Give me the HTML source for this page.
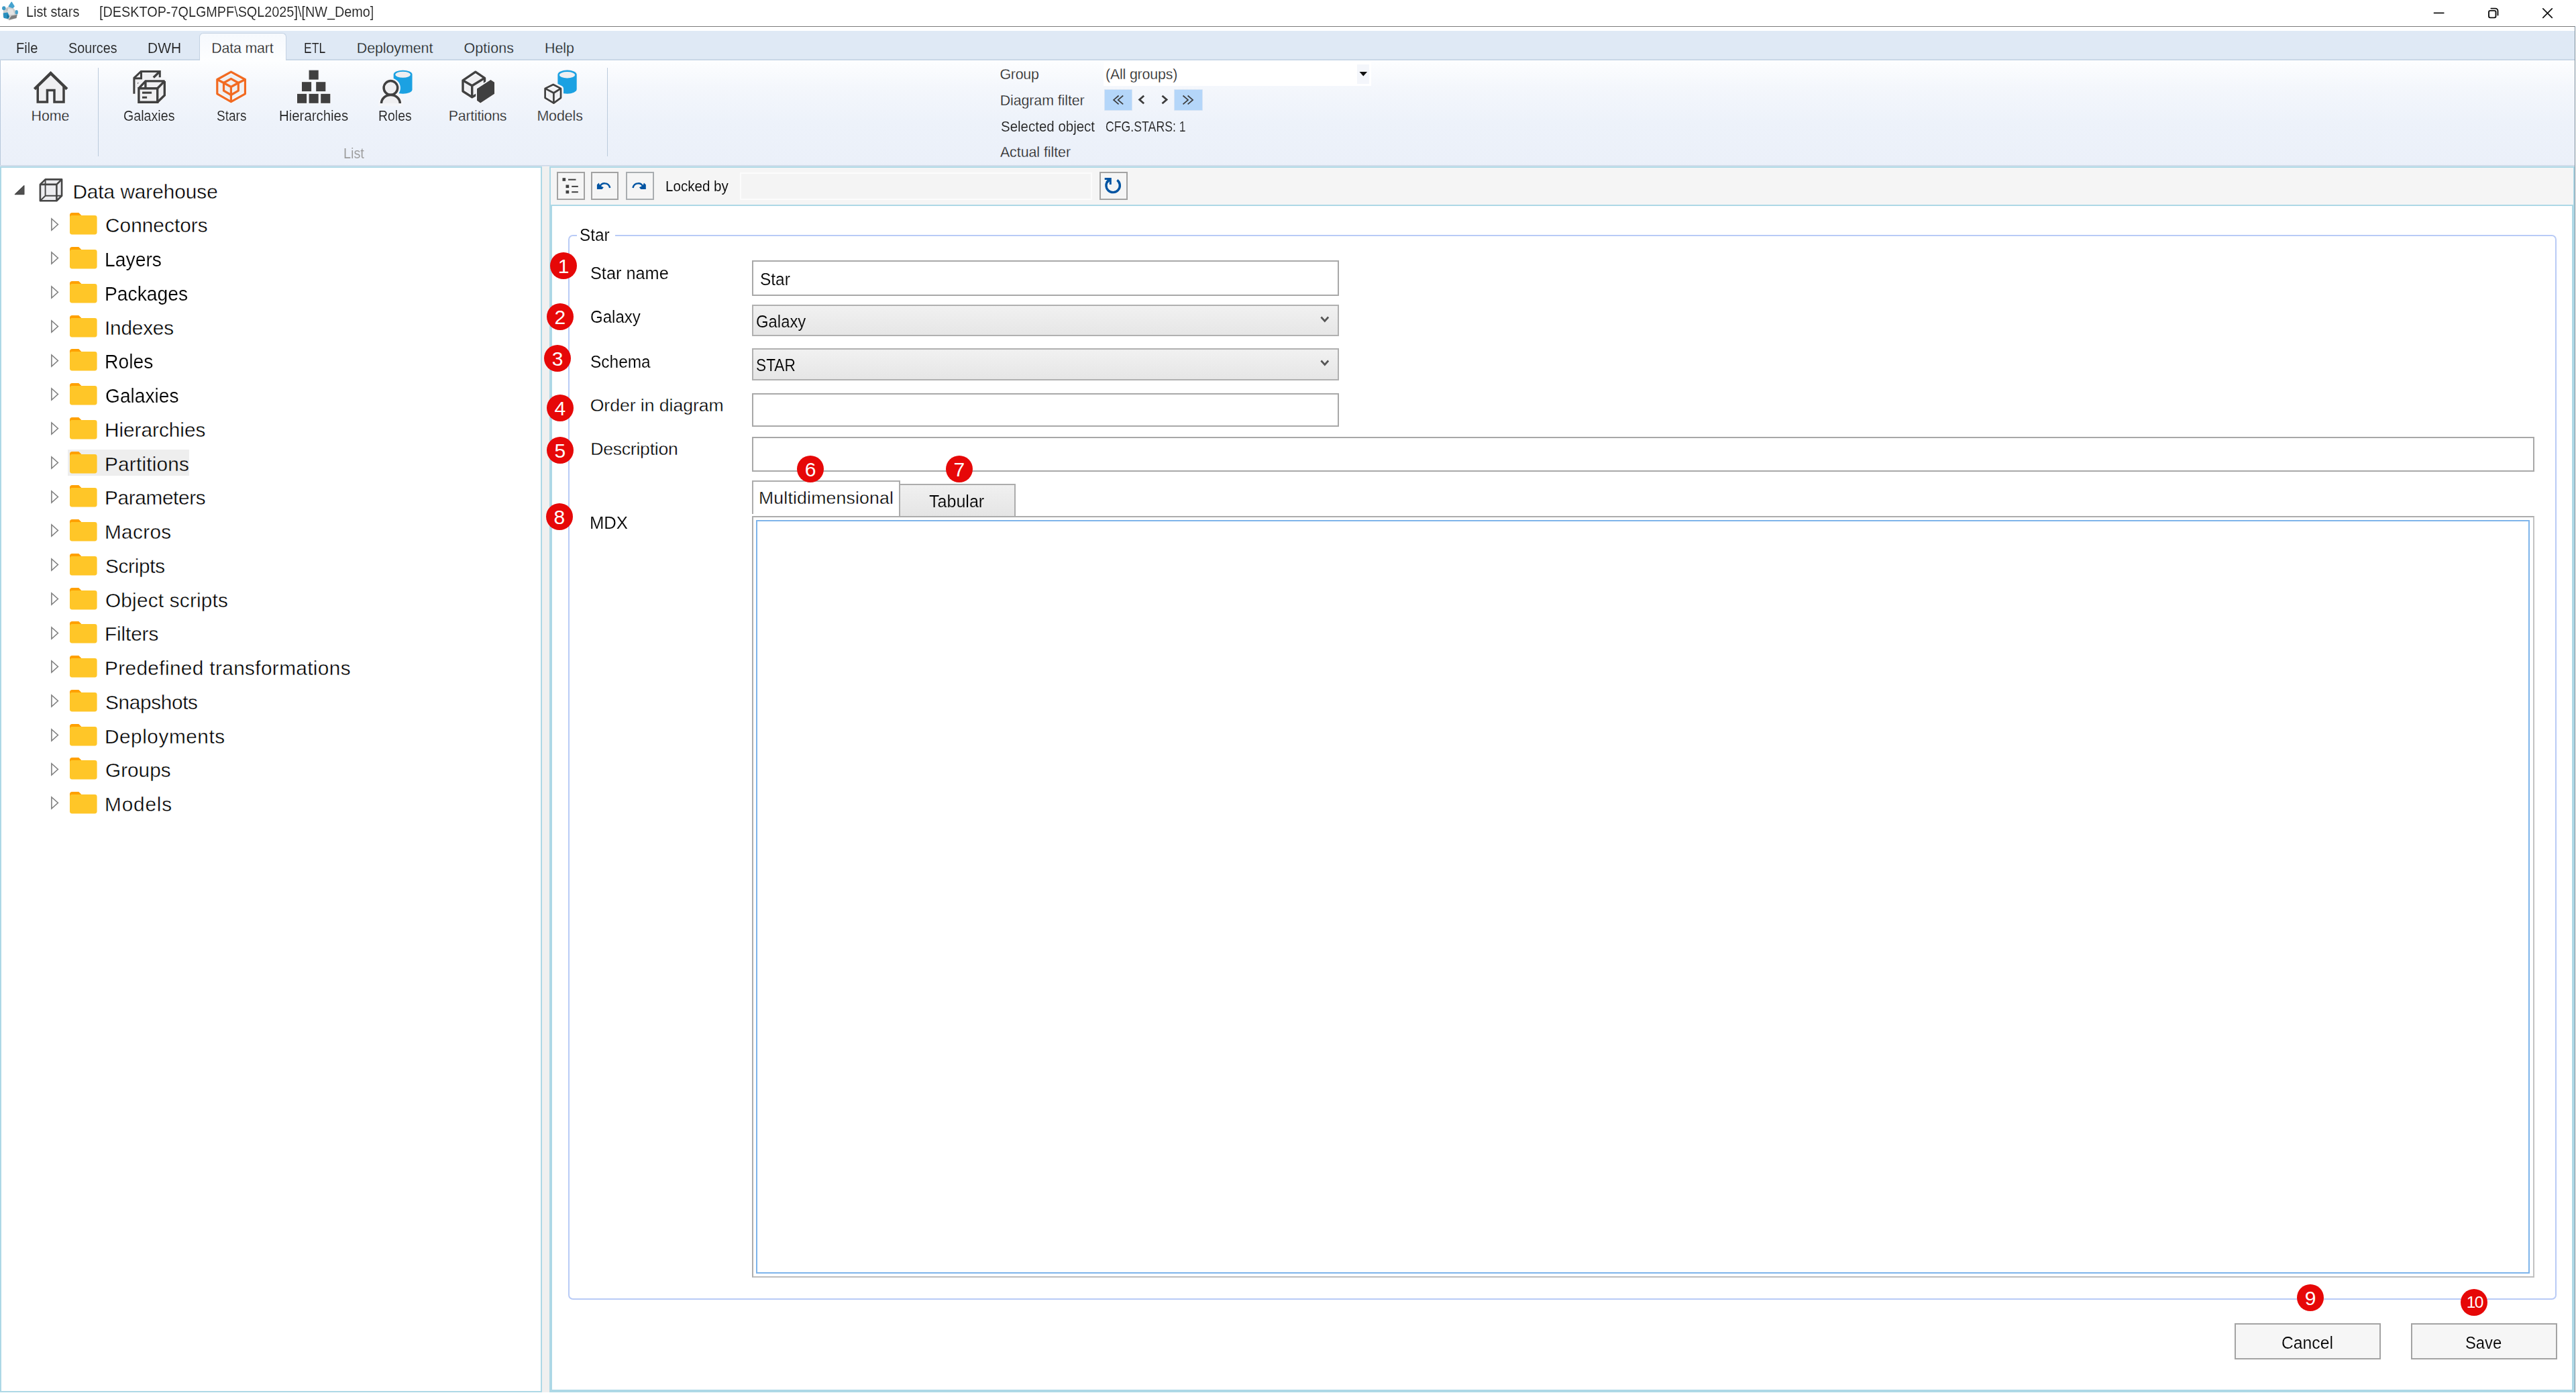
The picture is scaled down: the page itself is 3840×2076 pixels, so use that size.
<!DOCTYPE html>
<html><head><meta charset="utf-8"><title>List stars</title><style>
html,body{margin:0;padding:0}
body{width:3840px;height:2076px;position:relative;overflow:hidden;background:#fff;font-family:"Liberation Sans",sans-serif}
.a{position:absolute;display:block}
.t{position:absolute;white-space:pre;line-height:1;transform-origin:0 0;-webkit-text-stroke:0.0135em #fff;font-family:"Liberation Sans",sans-serif}
.c{width:40.200px;height:40.200px;border-radius:50%;background:#e60808;color:#fff;text-align:center;font-size:30px;line-height:41.700px;font-family:"Liberation Sans",sans-serif}
</style></head>
<body>
<div class="a" style="left:0px;top:39px;width:3839px;height:1px;background:#7a7a7a"></div>
<div class="a" style="left:3838px;top:39px;width:1px;height:2036px;background:#7c8e9b"></div>
<svg class="a" style="left:0px;top:0px;" width="34" height="36" viewBox="0 0 34 36"><defs><filter id="bl" x="-20%" y="-20%" width="140%" height="140%"><feGaussianBlur stdDeviation="0.750"/></filter></defs>
<g filter="url(#bl)">
<path d="M5 14 L14 9 L20 12 L26.500 20 L24.500 27 L14 30.500 L4.500 25.500 Z" fill="#cfcfcf"/>
<path d="M13 29.500 L24.500 27 L25.500 22 L17 23.500 Z" fill="#7e7e7e"/>
<path d="M12 13 L19 14 L21.500 21.500 L14 22 L11 18 Z" fill="#e4e4e4"/>
<path d="M8 14 L12 12 L11 17 Z" fill="#bdbdbd"/>
<path d="M17.200 3.300 L21 9.500 L19 11.500 L13.300 9.500 Z" fill="#45a3cf" stroke="#45a3cf" stroke-width="1.500" stroke-linejoin="round"/>
<ellipse cx="5.800" cy="12.200" rx="2.700" ry="3" fill="#3c99c5"/>
<ellipse cx="24.700" cy="18.300" rx="2.200" ry="3.300" fill="#4aa1c9"/>
<path d="M5.300 20 L11 19 L13.500 24.500 L12 27.500 L6 26.300 Z" fill="#2a90c0" stroke="#2a90c0" stroke-width="1.200" stroke-linejoin="round"/>
<path d="M11 21 L13.500 24.500 L12 27.500 L10.500 26 Z" fill="#1d6f95"/>
</g></svg>
<svg class="a" style="left:3600px;top:0px;" width="240" height="39" viewBox="0 0 240 39"><g fill="none" stroke="#111" stroke-width="1.900" stroke-linecap="round">
<path d="M28.500 19.300 H42.800" stroke-width="1.700"/>
<rect x="110" y="15.900" width="10.500" height="10.500" rx="2.300"/>
<path d="M113.400 12.600 H119.700 a3.800 3.800 0 0 1 3.800 3.800 V22.500"/>
<path d="M190.800 12.800 L204.300 26.300 M204.300 12.800 L190.800 26.300" stroke-width="1.700"/>
</g></svg>
<div class="a" style="left:0px;top:46px;width:3838px;height:44px;background:#dfe9f5"></div>
<div class="a" style="left:0px;top:88px;width:3838px;height:2px;background:linear-gradient(#cfdbe9,#c3d3e4)"></div>
<div class="a" style="left:0px;top:90px;width:3838px;height:156px;background:linear-gradient(#fdfeff 0%,#f4f7fc 25%,#edf2fa 60%,#ebf0f9 100%);border-left:1.5px solid #b7c8db;box-sizing:border-box"></div>
<div class="a" style="left:0px;top:246px;width:3838px;height:1px;background:#cdd9e7"></div>
<div class="a" style="left:0px;top:247px;width:3838px;height:1px;background:#dae1ed"></div>
<div class="a" style="left:297px;top:49px;width:129.5px;height:41px;background:linear-gradient(#f6f9fd,#fdfeff);border:1.5px solid #c3d2e3;border-bottom:none;border-radius:6px 6px 0 0;box-sizing:border-box"></div>
<div class="a" style="left:146px;top:101px;width:1.2px;height:132px;background:#bccbdc"></div>
<div class="a" style="left:905px;top:101px;width:1.2px;height:132px;background:#bccbdc"></div>
<svg class="a" style="left:44px;top:100px;" width="64" height="60" viewBox="44 100 64 60">
<path d="M56.250 128.500 L75.600 110.500 L95 128.500 V152 H81 V134.500 H70.450 V152 H56.250 Z" fill="none" stroke="#f5f6f9" stroke-width="7" stroke-linejoin="round" opacity="0.800"/>
<path d="M56.250 128.500 L75.600 110.500 L95 128.500 V152 H81 V134.500 H70.450 V152 H56.250 Z" fill="#efeff1"/>
<rect x="71.900" y="136" width="7.300" height="18" fill="#f5f6f9"/>
<path d="M56.250 127.500 V152 H70.450 V134.550 H81 V152 H95 V127.500" fill="none" stroke="#404040" stroke-width="3.500"/>
<path d="M51.400 132.800 L75.600 109.100 L99.900 132.800" fill="none" stroke="#404040" stroke-width="4.300"/>
</svg>
<svg class="a" style="left:194px;top:100px;" width="58" height="60" viewBox="194 100 58 60">
<path d="M199.900 139.800 V116 L210 106.500 H238.300 V118 H245.300 V142 L234.700 152.200 H206.900 V139.800 Z" fill="none" stroke="#f5f6f9" stroke-width="6.500" stroke-linejoin="round" opacity="0.800"/>
<path d="M199.900 139.800 V116 L210 106.500 H238.300 V131 H199.900 Z" fill="#efeff1"/>
<g fill="none" stroke="#404040" stroke-width="3">
<path d="M199.900 139.800 V116.200 L210.200 106.500 H238.300 V115.200"/>
<path d="M199.900 116.800 H212"/><path d="M210.500 106.500 V118"/>
<path d="M238 106.800 L228.800 115.600" stroke-width="3.400"/>
</g>
<path d="M206.900 131.700 L217 120.900 H245.300 V142 L234.700 152.200 H206.900 Z" fill="#efeff1" stroke="#f5f6f9" stroke-width="5.500" />
<g fill="none" stroke="#404040" stroke-width="3.400" stroke-linejoin="miter" stroke-miterlimit="1.500">
<path d="M206.900 131.700 H234.700 V152.200 H206.900 Z" stroke-miterlimit="4"/>
<path d="M206.900 131.700 L217 120.900 H245.300 L234.700 131.700"/>
<path d="M245.300 120.900 V142 L234.700 152.200"/>
<path d="M216.900 120.900 V131.700"/>
</g>
<rect x="212" y="136.600" width="14.100" height="3.100" fill="#404040"/><rect x="212" y="143.700" width="7.100" height="3" fill="#404040"/>
<path d="M205 123.300 l1.800 0 l-1.800 2 Z" fill="#404040"/>
</svg>
<svg class="a" style="left:318px;top:100px;" width="54" height="60" viewBox="318 100 54 60">
<path d="M344.400 107.100 L365.400 118.500 V139.800 L344.400 151.700 L323.800 139.800 V118.500 Z" fill="#efeff1" stroke="#f5f6f9" stroke-width="6.500" stroke-linejoin="round"/>
<g fill="none" stroke="#f26a21" stroke-width="3.200" stroke-linejoin="round">
<path d="M344.400 107.100 L365.400 118.500 V139.800 L344.400 151.700 L323.800 139.800 V118.500 Z"/>
<path d="M323.800 118.500 L333.500 123.500 M365.400 118.500 L355.300 123.500"/>
<path d="M344.400 117.400 L355.300 123.500 V135.200 L344.400 141.500 L333.500 135.200 V123.500 Z"/>
<path d="M333.500 123.500 L344.400 129.500 L355.300 123.500 M344.400 129.500 V151.700"/>
</g></svg>
<svg class="a" style="left:438px;top:100px;" width="60" height="60" viewBox="438 100 60 60"><rect x="460.6" y="104.7" width="14.100" height="13.900" fill="#404040" stroke="#f5f6f9" stroke-width="2.500" paint-order="stroke"/><rect x="450" y="122.2" width="14.100" height="13.900" fill="#404040" stroke="#f5f6f9" stroke-width="2.500" paint-order="stroke"/><rect x="471.2" y="122.2" width="14.100" height="13.900" fill="#404040" stroke="#f5f6f9" stroke-width="2.500" paint-order="stroke"/><rect x="443" y="139.9" width="14.100" height="13.900" fill="#404040" stroke="#f5f6f9" stroke-width="2.500" paint-order="stroke"/><rect x="460.6" y="139.9" width="14.100" height="13.900" fill="#404040" stroke="#f5f6f9" stroke-width="2.500" paint-order="stroke"/><rect x="478.2" y="139.9" width="14.100" height="13.900" fill="#404040" stroke="#f5f6f9" stroke-width="2.500" paint-order="stroke"/></svg>
<svg class="a" style="left:560px;top:100px;" width="60" height="60" viewBox="560 100 60 60">
<path d="M586.700 111 a13.900 6.200 0 0 1 27.800 0 V133.600 a13.900 6.200 0 0 1 -27.800 0 Z" fill="#1ba1e2" stroke="#f5f6f9" stroke-width="3" paint-order="stroke"/>
<ellipse cx="600.600" cy="111.300" rx="11.300" ry="4.500" fill="#efeff1"/>
<circle cx="582.400" cy="130.900" r="12" fill="#f5f6f9" stroke="#f5f6f9" stroke-width="5"/>
<path d="M566.700 155.500 V153 a15.700 14 0 0 1 31.400 0 V155.500 Z" fill="#f5f6f9" stroke="#f5f6f9" stroke-width="5"/>
<circle cx="582.400" cy="130.900" r="10.300" fill="#efeff1" stroke="#404040" stroke-width="3.500"/>
<path d="M568.500 154 a13.900 12.500 0 0 1 27.800 0" fill="#efeff1" stroke="#404040" stroke-width="3.500"/>
</svg>
<svg class="a" style="left:682px;top:100px;" width="60" height="60" viewBox="682 100 60 60">
<path d="M708.800 107.200 L722.500 116.300 V134 L703.700 144.700 L690 136 V119.800 Z" fill="#efeff1" stroke="#f5f6f9" stroke-width="7" stroke-linejoin="round"/>
<g stroke="#404040" stroke-width="3.400" stroke-linejoin="round" fill="none">
<path d="M708.800 107.200 L722.500 116.300 V134 L703.700 144.700 L690 136 V119.800 Z"/>
<path d="M690 119.800 L703.700 127.700 L722.500 116.300 M703.700 127.700 V144.700"/>
</g>
<path d="M711 132.200 L731.500 118.900 L737 122.800 V139.800 L716.100 153.500 L711 149.700 Z" fill="#404040" stroke="#f5f6f9" stroke-width="3.600" paint-order="stroke" stroke-linejoin="round"/>
</svg>
<svg class="a" style="left:806px;top:100px;" width="60" height="60" viewBox="806 100 60 60">
<path d="M831.400 111.500 a14.150 7 0 0 1 28.300 0 V132.800 a14.150 7 0 0 1 -28.300 0 Z" fill="#1ba1e2" stroke="#f5f6f9" stroke-width="3" paint-order="stroke"/>
<ellipse cx="845.500" cy="111.800" rx="11.700" ry="4.700" fill="#efeff1"/>
<path d="M824.700 126 L836 131.900 V145.800 L825.400 153.600 L812.600 145.800 V131.900 Z" fill="#efeff1" stroke="#f5f6f9" stroke-width="8" stroke-linejoin="round"/>
<g stroke="#404040" stroke-width="2.700" stroke-linejoin="round" fill="none">
<path d="M824.700 126 L836 131.900 V145.800 L825.400 153.600 L812.600 145.800 V131.900 Z"/>
<path d="M812.600 131.900 L825.400 138.500 L836 131.900 M825.400 138.500 V153.600"/>
</g>
</svg>
<div class="a" style="left:1644.5px;top:91px;width:399.1px;height:37px;background:#fff"></div>
<div class="a" style="left:2022.7px;top:95.7px;width:18.7px;height:29.7px;background:#f4f6fb"></div>
<svg class="a" style="left:2020px;top:100px;" width="25" height="20" viewBox="2020 100 25 20"><path d="M2026.500 107 H2038.100 L2032.300 113.400 Z" fill="#111"/></svg>
<div class="a" style="left:1646.5px;top:133.8px;width:40.7px;height:30.2px;background:#b4d6f9;box-shadow:0 0 0 0.800px #cfe0f3"></div>
<div class="a" style="left:1751.1px;top:133.8px;width:41px;height:30.2px;background:#b4d6f9;box-shadow:0 0 0 0.800px #cfe0f3"></div>
<svg class="a" style="left:1640px;top:130px;" width="160" height="40" viewBox="1640 130 160 40"><g fill="none" stroke="#3c3c3c" stroke-width="1.700">
<path d="M1667.600 142.500 L1660.100 148.900 L1667.600 155.300"/><path d="M1674.200 142.500 L1666.700 148.900 L1674.200 155.300"/>
<path d="M1705.200 142.700 L1698.600 148.500 L1705.200 154.300" stroke-width="2.800"/>
<path d="M1732.500 142.700 L1739.100 148.500 L1732.500 154.300" stroke-width="2.800"/>
<path d="M1763.500 142.500 L1771 148.900 L1763.500 155.300"/><path d="M1770.600 142.500 L1778.100 148.900 L1770.600 155.300"/>
</g></svg>
<div class="a" style="left:0px;top:248px;width:808px;height:1826.6px;background:#fff;border:2px solid #add8e6;border-top-width:2.500px;box-sizing:border-box"></div>
<div class="a" style="left:808px;top:248px;width:11px;height:1826.6px;background:#f0f0f0"></div>
<div class="a" style="left:819px;top:248px;width:3019px;height:1826.6px;background:#f5f5f5;border:2px solid #add8e6;border-top-width:2.500px;box-sizing:border-box"></div>
<div class="a" style="left:819px;top:305px;width:3019px;height:1769.6px;background:#fff;border:4px solid #add8e6;border-top-width:2px;box-sizing:border-box"></div>
<div class="a" style="left:101px;top:669.5px;width:181px;height:39px;background:#eeeeee"></div>
<svg class="a" style="left:16px;top:270px;" width="26" height="26" viewBox="16 270 26 26"><path d="M22.300 289.600 H35.900 V276.600 Z" fill="#505050" stroke="#454545" stroke-width="1.200" stroke-linejoin="round"/></svg>
<svg class="a" style="left:54px;top:262px;" width="44" height="43" viewBox="54 262 44 43"><g fill="#ededf0" stroke="#454545" stroke-width="2.600" stroke-linejoin="round">
<path d="M59.900 274.900 L67.600 267.400 H92.100 V291.700 L84.400 299.300 H59.900 Z"/>
<path d="M59.900 274.900 H84.400 V299.300 M84.400 274.900 L92.100 267.400" fill="none"/>
<path d="M67.600 267.400 V291.700 H92.100 M67.600 291.700 L59.900 299.300" fill="none" stroke-width="1.900"/>
</g></svg>
<svg class="a" style="left:74px;top:322.5px;" width="16" height="23" viewBox="0 0 16 23"><path d="M2.900 3 L12.400 11.500 L2.900 20 Z" fill="#fff" stroke="#7f7f7f" stroke-width="1.600" stroke-linejoin="miter"/></svg>
<svg class="a" style="left:103.9px;top:317.3px;" width="41" height="33" viewBox="0 0 41 33"><path d="M0 3.600 a3.600 3.600 0 0 1 3.600 -3.600 H13.300 L17.600 4.200 H20 V12 H0 Z" fill="#ffa000"/>
<rect x="0" y="4.100" width="40.600" height="28.400" rx="3.400" fill="#ffc628"/></svg>
<svg class="a" style="left:74px;top:373.25px;" width="16" height="23" viewBox="0 0 16 23"><path d="M2.900 3 L12.400 11.500 L2.900 20 Z" fill="#fff" stroke="#7f7f7f" stroke-width="1.600" stroke-linejoin="miter"/></svg>
<svg class="a" style="left:103.9px;top:368.05px;" width="41" height="33" viewBox="0 0 41 33"><path d="M0 3.600 a3.600 3.600 0 0 1 3.600 -3.600 H13.300 L17.600 4.200 H20 V12 H0 Z" fill="#ffa000"/>
<rect x="0" y="4.100" width="40.600" height="28.400" rx="3.400" fill="#ffc628"/></svg>
<svg class="a" style="left:74px;top:424px;" width="16" height="23" viewBox="0 0 16 23"><path d="M2.900 3 L12.400 11.500 L2.900 20 Z" fill="#fff" stroke="#7f7f7f" stroke-width="1.600" stroke-linejoin="miter"/></svg>
<svg class="a" style="left:103.9px;top:418.8px;" width="41" height="33" viewBox="0 0 41 33"><path d="M0 3.600 a3.600 3.600 0 0 1 3.600 -3.600 H13.300 L17.600 4.200 H20 V12 H0 Z" fill="#ffa000"/>
<rect x="0" y="4.100" width="40.600" height="28.400" rx="3.400" fill="#ffc628"/></svg>
<svg class="a" style="left:74px;top:474.75px;" width="16" height="23" viewBox="0 0 16 23"><path d="M2.900 3 L12.400 11.500 L2.900 20 Z" fill="#fff" stroke="#7f7f7f" stroke-width="1.600" stroke-linejoin="miter"/></svg>
<svg class="a" style="left:103.9px;top:469.55px;" width="41" height="33" viewBox="0 0 41 33"><path d="M0 3.600 a3.600 3.600 0 0 1 3.600 -3.600 H13.300 L17.600 4.200 H20 V12 H0 Z" fill="#ffa000"/>
<rect x="0" y="4.100" width="40.600" height="28.400" rx="3.400" fill="#ffc628"/></svg>
<svg class="a" style="left:74px;top:525.5px;" width="16" height="23" viewBox="0 0 16 23"><path d="M2.900 3 L12.400 11.500 L2.900 20 Z" fill="#fff" stroke="#7f7f7f" stroke-width="1.600" stroke-linejoin="miter"/></svg>
<svg class="a" style="left:103.9px;top:520.3px;" width="41" height="33" viewBox="0 0 41 33"><path d="M0 3.600 a3.600 3.600 0 0 1 3.600 -3.600 H13.300 L17.600 4.200 H20 V12 H0 Z" fill="#ffa000"/>
<rect x="0" y="4.100" width="40.600" height="28.400" rx="3.400" fill="#ffc628"/></svg>
<svg class="a" style="left:74px;top:576.25px;" width="16" height="23" viewBox="0 0 16 23"><path d="M2.900 3 L12.400 11.500 L2.900 20 Z" fill="#fff" stroke="#7f7f7f" stroke-width="1.600" stroke-linejoin="miter"/></svg>
<svg class="a" style="left:103.9px;top:571.05px;" width="41" height="33" viewBox="0 0 41 33"><path d="M0 3.600 a3.600 3.600 0 0 1 3.600 -3.600 H13.300 L17.600 4.200 H20 V12 H0 Z" fill="#ffa000"/>
<rect x="0" y="4.100" width="40.600" height="28.400" rx="3.400" fill="#ffc628"/></svg>
<svg class="a" style="left:74px;top:627px;" width="16" height="23" viewBox="0 0 16 23"><path d="M2.900 3 L12.400 11.500 L2.900 20 Z" fill="#fff" stroke="#7f7f7f" stroke-width="1.600" stroke-linejoin="miter"/></svg>
<svg class="a" style="left:103.9px;top:621.8px;" width="41" height="33" viewBox="0 0 41 33"><path d="M0 3.600 a3.600 3.600 0 0 1 3.600 -3.600 H13.300 L17.600 4.200 H20 V12 H0 Z" fill="#ffa000"/>
<rect x="0" y="4.100" width="40.600" height="28.400" rx="3.400" fill="#ffc628"/></svg>
<svg class="a" style="left:74px;top:677.75px;" width="16" height="23" viewBox="0 0 16 23"><path d="M2.900 3 L12.400 11.500 L2.900 20 Z" fill="#fff" stroke="#7f7f7f" stroke-width="1.600" stroke-linejoin="miter"/></svg>
<svg class="a" style="left:103.9px;top:672.55px;" width="41" height="33" viewBox="0 0 41 33"><path d="M0 3.600 a3.600 3.600 0 0 1 3.600 -3.600 H13.300 L17.600 4.200 H20 V12 H0 Z" fill="#ffa000"/>
<rect x="0" y="4.100" width="40.600" height="28.400" rx="3.400" fill="#ffc628"/></svg>
<svg class="a" style="left:74px;top:728.5px;" width="16" height="23" viewBox="0 0 16 23"><path d="M2.900 3 L12.400 11.500 L2.900 20 Z" fill="#fff" stroke="#7f7f7f" stroke-width="1.600" stroke-linejoin="miter"/></svg>
<svg class="a" style="left:103.9px;top:723.3px;" width="41" height="33" viewBox="0 0 41 33"><path d="M0 3.600 a3.600 3.600 0 0 1 3.600 -3.600 H13.300 L17.600 4.200 H20 V12 H0 Z" fill="#ffa000"/>
<rect x="0" y="4.100" width="40.600" height="28.400" rx="3.400" fill="#ffc628"/></svg>
<svg class="a" style="left:74px;top:779.25px;" width="16" height="23" viewBox="0 0 16 23"><path d="M2.900 3 L12.400 11.500 L2.900 20 Z" fill="#fff" stroke="#7f7f7f" stroke-width="1.600" stroke-linejoin="miter"/></svg>
<svg class="a" style="left:103.9px;top:774.05px;" width="41" height="33" viewBox="0 0 41 33"><path d="M0 3.600 a3.600 3.600 0 0 1 3.600 -3.600 H13.300 L17.600 4.200 H20 V12 H0 Z" fill="#ffa000"/>
<rect x="0" y="4.100" width="40.600" height="28.400" rx="3.400" fill="#ffc628"/></svg>
<svg class="a" style="left:74px;top:830px;" width="16" height="23" viewBox="0 0 16 23"><path d="M2.900 3 L12.400 11.500 L2.900 20 Z" fill="#fff" stroke="#7f7f7f" stroke-width="1.600" stroke-linejoin="miter"/></svg>
<svg class="a" style="left:103.9px;top:824.8px;" width="41" height="33" viewBox="0 0 41 33"><path d="M0 3.600 a3.600 3.600 0 0 1 3.600 -3.600 H13.300 L17.600 4.200 H20 V12 H0 Z" fill="#ffa000"/>
<rect x="0" y="4.100" width="40.600" height="28.400" rx="3.400" fill="#ffc628"/></svg>
<svg class="a" style="left:74px;top:880.75px;" width="16" height="23" viewBox="0 0 16 23"><path d="M2.900 3 L12.400 11.500 L2.900 20 Z" fill="#fff" stroke="#7f7f7f" stroke-width="1.600" stroke-linejoin="miter"/></svg>
<svg class="a" style="left:103.9px;top:875.55px;" width="41" height="33" viewBox="0 0 41 33"><path d="M0 3.600 a3.600 3.600 0 0 1 3.600 -3.600 H13.300 L17.600 4.200 H20 V12 H0 Z" fill="#ffa000"/>
<rect x="0" y="4.100" width="40.600" height="28.400" rx="3.400" fill="#ffc628"/></svg>
<svg class="a" style="left:74px;top:931.5px;" width="16" height="23" viewBox="0 0 16 23"><path d="M2.900 3 L12.400 11.500 L2.900 20 Z" fill="#fff" stroke="#7f7f7f" stroke-width="1.600" stroke-linejoin="miter"/></svg>
<svg class="a" style="left:103.9px;top:926.3px;" width="41" height="33" viewBox="0 0 41 33"><path d="M0 3.600 a3.600 3.600 0 0 1 3.600 -3.600 H13.300 L17.600 4.200 H20 V12 H0 Z" fill="#ffa000"/>
<rect x="0" y="4.100" width="40.600" height="28.400" rx="3.400" fill="#ffc628"/></svg>
<svg class="a" style="left:74px;top:982.25px;" width="16" height="23" viewBox="0 0 16 23"><path d="M2.900 3 L12.400 11.500 L2.900 20 Z" fill="#fff" stroke="#7f7f7f" stroke-width="1.600" stroke-linejoin="miter"/></svg>
<svg class="a" style="left:103.9px;top:977.05px;" width="41" height="33" viewBox="0 0 41 33"><path d="M0 3.600 a3.600 3.600 0 0 1 3.600 -3.600 H13.300 L17.600 4.200 H20 V12 H0 Z" fill="#ffa000"/>
<rect x="0" y="4.100" width="40.600" height="28.400" rx="3.400" fill="#ffc628"/></svg>
<svg class="a" style="left:74px;top:1033px;" width="16" height="23" viewBox="0 0 16 23"><path d="M2.900 3 L12.400 11.500 L2.900 20 Z" fill="#fff" stroke="#7f7f7f" stroke-width="1.600" stroke-linejoin="miter"/></svg>
<svg class="a" style="left:103.9px;top:1027.8px;" width="41" height="33" viewBox="0 0 41 33"><path d="M0 3.600 a3.600 3.600 0 0 1 3.600 -3.600 H13.300 L17.600 4.200 H20 V12 H0 Z" fill="#ffa000"/>
<rect x="0" y="4.100" width="40.600" height="28.400" rx="3.400" fill="#ffc628"/></svg>
<svg class="a" style="left:74px;top:1083.75px;" width="16" height="23" viewBox="0 0 16 23"><path d="M2.900 3 L12.400 11.500 L2.900 20 Z" fill="#fff" stroke="#7f7f7f" stroke-width="1.600" stroke-linejoin="miter"/></svg>
<svg class="a" style="left:103.9px;top:1078.55px;" width="41" height="33" viewBox="0 0 41 33"><path d="M0 3.600 a3.600 3.600 0 0 1 3.600 -3.600 H13.300 L17.600 4.200 H20 V12 H0 Z" fill="#ffa000"/>
<rect x="0" y="4.100" width="40.600" height="28.400" rx="3.400" fill="#ffc628"/></svg>
<svg class="a" style="left:74px;top:1134.5px;" width="16" height="23" viewBox="0 0 16 23"><path d="M2.900 3 L12.400 11.500 L2.900 20 Z" fill="#fff" stroke="#7f7f7f" stroke-width="1.600" stroke-linejoin="miter"/></svg>
<svg class="a" style="left:103.9px;top:1129.3px;" width="41" height="33" viewBox="0 0 41 33"><path d="M0 3.600 a3.600 3.600 0 0 1 3.600 -3.600 H13.300 L17.600 4.200 H20 V12 H0 Z" fill="#ffa000"/>
<rect x="0" y="4.100" width="40.600" height="28.400" rx="3.400" fill="#ffc628"/></svg>
<svg class="a" style="left:74px;top:1185.25px;" width="16" height="23" viewBox="0 0 16 23"><path d="M2.900 3 L12.400 11.500 L2.900 20 Z" fill="#fff" stroke="#7f7f7f" stroke-width="1.600" stroke-linejoin="miter"/></svg>
<svg class="a" style="left:103.9px;top:1180.05px;" width="41" height="33" viewBox="0 0 41 33"><path d="M0 3.600 a3.600 3.600 0 0 1 3.600 -3.600 H13.300 L17.600 4.200 H20 V12 H0 Z" fill="#ffa000"/>
<rect x="0" y="4.100" width="40.600" height="28.400" rx="3.400" fill="#ffc628"/></svg>
<div class="a" style="left:830.3px;top:256.3px;width:41.8px;height:41.8px;background:#f5f5f5;border:2.300px solid #a2a2a2;box-sizing:border-box"></div>
<div class="a" style="left:880.6px;top:256.3px;width:41.8px;height:41.8px;background:#f5f5f5;border:2.300px solid #a2a2a2;box-sizing:border-box"></div>
<div class="a" style="left:933.1px;top:256.3px;width:41.8px;height:41.8px;background:#f5f5f5;border:2.300px solid #a9adb0;box-sizing:border-box"></div>
<div class="a" style="left:1638.9px;top:256.3px;width:41.8px;height:41.8px;background:#f5f5f5;border:2.300px solid #a2a2a2;box-sizing:border-box"></div>
<div class="a" style="left:1103px;top:256.5px;width:525px;height:41.5px;background:#f4f4f4;border:2px solid #fcfcfc;box-sizing:border-box"></div>
<svg class="a" style="left:830px;top:256px;" width="42" height="42" viewBox="0 0 42 42"><g fill="#404040">
<rect x="8.500" y="9.200" width="4.600" height="4.600"/><rect x="17" y="10.700" width="11.500" height="2"/>
<rect x="13.500" y="19.500" width="4.700" height="4.600"/><rect x="22.200" y="20.900" width="9.600" height="2"/>
<rect x="13.500" y="27.800" width="4.700" height="4.600"/><rect x="22.200" y="29.200" width="9.600" height="2"/>
</g></svg>
<svg class="a" style="left:880px;top:256px;" width="43" height="43" viewBox="880 256 43 43"><path d="M894.300 278.300 C896.500 271.700 907.300 271.200 909.200 280" fill="none" stroke="#0054a2" stroke-width="2.500"/>
<path d="M889.900 275.300 L892.800 272.400 L894.200 276.500 L899.800 279.300 L897.400 281.900 H889.900 Z" fill="#0054a2"/></svg>
<svg class="a" style="left:933px;top:256px;" width="43" height="43" viewBox="933 256 43 43"><path d="M958.400 278.300 C956.200 271.700 945.400 271.200 943.500 280" fill="none" stroke="#0054a2" stroke-width="2.500"/>
<path d="M962.800 275.300 L959.900 272.400 L958.500 276.500 L952.900 279.300 L955.300 281.900 H962.800 Z" fill="#0054a2"/></svg>
<svg class="a" style="left:1639px;top:256px;" width="42" height="42" viewBox="0 0 42 42"><path d="M26.300 12.300 A10.200 10.200 0 1 1 13.400 12.800" fill="none" stroke="#0054a2" stroke-width="3.400"/>
<path d="M7.700 10.500 H16.300 V18.900" fill="none" stroke="#0054a2" stroke-width="3"/>
<path d="M15.800 11 L10.800 16" fill="none" stroke="#0054a2" stroke-width="3.400"/></svg>
<div class="a" style="left:847px;top:349.7px;width:2964px;height:1587.2px;border:2px solid #b9cbf6;border-radius:7px;box-sizing:border-box"></div>
<div class="a" style="left:860px;top:340px;width:57px;height:25px;background:#fff"></div>
<div class="a" style="left:1121px;top:388.4px;width:875px;height:52.4px;background:#fff;border:2px solid #a8a8a8;box-sizing:border-box"></div>
<div class="a" style="left:1121px;top:454px;width:875px;height:47px;background:linear-gradient(#f1f1f1,#e6e6e6);border:2px solid #b0b0b0;box-sizing:border-box"></div>
<div class="a" style="left:1121px;top:519.3px;width:875px;height:47.4px;background:linear-gradient(#f1f1f1,#e6e6e6);border:2px solid #b0b0b0;box-sizing:border-box"></div>
<div class="a" style="left:1121px;top:585.5px;width:875px;height:50.2px;background:#fff;border:2px solid #a8a8a8;box-sizing:border-box"></div>
<div class="a" style="left:1121px;top:651px;width:2657px;height:52px;background:#fff;border:2px solid #a8a8a8;box-sizing:border-box"></div>
<svg class="a" style="left:1967.5px;top:470.5px;" width="15" height="11" viewBox="0 0 15 11"><path d="M1.400 1.500 L6.800 7.500 L12.200 1.500" fill="none" stroke="#555" stroke-width="2.700"/></svg>
<svg class="a" style="left:1967.5px;top:536px;" width="15" height="11" viewBox="0 0 15 11"><path d="M1.400 1.500 L6.800 7.500 L12.200 1.500" fill="none" stroke="#555" stroke-width="2.700"/></svg>
<div class="a" style="left:1121px;top:768.9px;width:2657px;height:1135.6px;background:#fff;border:2px solid #acacac;border-right-color:#c2c2c2;border-bottom-color:#bdbdbd;box-sizing:border-box"></div>
<div class="a" style="left:1340px;top:720.9px;width:173.9px;height:48.1px;background:linear-gradient(#f0f0f0,#e5e5e5);border:2px solid #acacac;border-bottom:none;box-sizing:border-box"></div>
<div class="a" style="left:1121px;top:716.4px;width:220.9px;height:49.6px;background:#fff;border:2px solid #acacac;border-bottom:none;box-sizing:border-box"></div>
<div class="a" style="left:1126.8px;top:775.4px;width:2644.4px;height:1122.2px;background:#fff;border:2px solid #7eb4ea;box-sizing:border-box"></div>
<div class="a" style="left:3331.2px;top:1972.2px;width:218px;height:53.7px;background:#f6f6f6;border:2.500px solid #a3a3a3;box-sizing:border-box"></div>
<div class="a" style="left:3593.8px;top:1972.2px;width:218.1px;height:53.7px;background:#f6f6f6;border:2.500px solid #a3a3a3;box-sizing:border-box"></div>
<div class="a c" style="left:819.9px;top:375.75px">1</div>
<div class="a c" style="left:814.75px;top:451.9px">2</div>
<div class="a c" style="left:810.9px;top:513.9px">3</div>
<div class="a c" style="left:814.7px;top:588.1px">4</div>
<div class="a c" style="left:814.7px;top:650.8px">5</div>
<div class="a c" style="left:1187.9px;top:678.8px">6</div>
<div class="a c" style="left:1409.7px;top:678.8px">7</div>
<div class="a c" style="left:813.8px;top:749.6px">8</div>
<div class="a c" style="left:3424.05px;top:1913.6px">9</div>
<div class="a c" style="left:3668px;top:1920.75px;font-size:24.500px;letter-spacing:-1.500px;line-height:39.400px;text-indent:1.400px">10</div>
<span class="t" style="left:38.87px;top:8.00px;font-size:21.4px;color:#1c1c1c;-webkit-text-stroke-width:0.006em;transform:scaleX(0.9274)">List stars</span>
<span class="t" style="left:147.57px;top:8.00px;font-size:21.4px;color:#1c1c1c;-webkit-text-stroke-width:0.006em;transform:scaleX(0.9264)">[DESKTOP-7QLGMPF\SQL2025]\[NW_Demo]</span>
<span class="t" style="left:23.56px;top:62.00px;font-size:21.4px;color:#1e1e1e;-webkit-text-stroke-color:#dfe9f5;-webkit-text-stroke-width:0.006em;transform:scaleX(0.9426)">File</span>
<span class="t" style="left:102.00px;top:62.00px;font-size:21.4px;color:#1e1e1e;-webkit-text-stroke-color:#dfe9f5;-webkit-text-stroke-width:0.006em;transform:scaleX(0.9257)">Sources</span>
<span class="t" style="left:220.22px;top:62.00px;font-size:21.4px;color:#1e1e1e;-webkit-text-stroke-color:#dfe9f5;-webkit-text-stroke-width:0.006em;transform:scaleX(0.9828)">DWH</span>
<span class="t" style="left:315.20px;top:62.00px;font-size:21.4px;letter-spacing:-0.171px;color:#1e1e1e;-webkit-text-stroke-color:#fafcfe">Data mart</span>
<span class="t" style="left:453.38px;top:62.00px;font-size:21.4px;color:#1e1e1e;-webkit-text-stroke-color:#dfe9f5;-webkit-text-stroke-width:0.006em;transform:scaleX(0.8217)">ETL</span>
<span class="t" style="left:531.80px;top:62.00px;font-size:21.4px;letter-spacing:-0.066px;color:#1e1e1e;-webkit-text-stroke-color:#dfe9f5">Deployment</span>
<span class="t" style="left:691.50px;top:62.00px;font-size:21.4px;letter-spacing:0.113px;color:#1e1e1e;-webkit-text-stroke-color:#dfe9f5">Options</span>
<span class="t" style="left:812.00px;top:62.00px;font-size:21.4px;letter-spacing:-0.032px;color:#1e1e1e;-webkit-text-stroke-color:#dfe9f5">Help</span>
<span class="t" style="left:46.50px;top:163.00px;font-size:21.4px;letter-spacing:-0.054px;color:#1e1e1e;-webkit-text-stroke-color:#eff3fb">Home</span>
<span class="t" style="left:183.58px;top:163.00px;font-size:21.4px;color:#1e1e1e;-webkit-text-stroke-color:#eff3fb;-webkit-text-stroke-width:0.006em;transform:scaleX(0.9187)">Galaxies</span>
<span class="t" style="left:322.70px;top:163.00px;font-size:21.4px;color:#1e1e1e;-webkit-text-stroke-color:#eff3fb;-webkit-text-stroke-width:0.006em;transform:scaleX(0.8897)">Stars</span>
<span class="t" style="left:415.55px;top:163.00px;font-size:21.4px;color:#1e1e1e;-webkit-text-stroke-color:#eff3fb;-webkit-text-stroke-width:0.006em;transform:scaleX(0.9532)">Hierarchies</span>
<span class="t" style="left:564.49px;top:163.00px;font-size:21.4px;color:#1e1e1e;-webkit-text-stroke-color:#eff3fb;-webkit-text-stroke-width:0.006em;transform:scaleX(0.9077)">Roles</span>
<span class="t" style="left:668.80px;top:163.00px;font-size:21.4px;letter-spacing:-0.275px;color:#1e1e1e;-webkit-text-stroke-color:#eff3fb">Partitions</span>
<span class="t" style="left:800.40px;top:163.00px;font-size:21.4px;letter-spacing:-0.092px;color:#1e1e1e;-webkit-text-stroke-color:#eff3fb">Models</span>
<span class="t" style="left:512.47px;top:219.00px;font-size:21.4px;color:#9a9a9a;-webkit-text-stroke-color:#ebf0f9;-webkit-text-stroke-width:0.006em;transform:scaleX(0.9275)">List</span>
<span class="t" style="left:1490.50px;top:101.00px;font-size:21.4px;letter-spacing:-0.264px;color:#1e1e1e;-webkit-text-stroke-color:#f8fafd">Group</span>
<span class="t" style="left:1648.00px;top:101.00px;font-size:21.4px;letter-spacing:-0.186px;color:#1e1e1e">(All groups)</span>
<span class="t" style="left:1490.70px;top:140.00px;font-size:21.4px;letter-spacing:-0.089px;color:#1e1e1e;-webkit-text-stroke-color:#f2f5fc">Diagram filter</span>
<span class="t" style="left:1491.50px;top:179.00px;font-size:21.4px;color:#1e1e1e;-webkit-text-stroke-color:#eef2fa;-webkit-text-stroke-width:0.006em;transform:scaleX(0.9575)">Selected object</span>
<span class="t" style="left:1647.77px;top:179.00px;font-size:21.4px;color:#1e1e1e;-webkit-text-stroke-color:#eef2fa;-webkit-text-stroke-width:0.006em;transform:scaleX(0.8276)">CFG.STARS: 1</span>
<span class="t" style="left:1490.90px;top:217.00px;font-size:21.4px;letter-spacing:-0.057px;color:#1e1e1e;-webkit-text-stroke-color:#ebf0f9">Actual filter</span>
<span class="t" style="left:108.40px;top:271.00px;font-size:29.75px;letter-spacing:-0.023px;color:#000">Data warehouse</span>
<span class="t" style="left:157.00px;top:321.00px;font-size:29.75px;letter-spacing:0.060px;color:#000">Connectors</span>
<span class="t" style="left:156.10px;top:372.00px;font-size:29.75px;color:#000;-webkit-text-stroke-width:0.006em;transform:scaleX(0.9523)">Layers</span>
<span class="t" style="left:156.10px;top:423.00px;font-size:29.75px;color:#000;-webkit-text-stroke-width:0.006em;transform:scaleX(0.9501)">Packages</span>
<span class="t" style="left:156.00px;top:474.00px;font-size:29.75px;letter-spacing:-0.187px;color:#000">Indexes</span>
<span class="t" style="left:156.10px;top:524.00px;font-size:29.75px;color:#000;-webkit-text-stroke-width:0.006em;transform:scaleX(0.951)">Roles</span>
<span class="t" style="left:157.05px;top:575.00px;font-size:29.75px;color:#000;-webkit-text-stroke-width:0.006em;transform:scaleX(0.9458)">Galaxies</span>
<span class="t" style="left:156.00px;top:626.00px;font-size:29.75px;letter-spacing:-0.007px;color:#000">Hierarchies</span>
<span class="t" style="left:156.00px;top:677.00px;font-size:29.75px;letter-spacing:0.207px;color:#000;-webkit-text-stroke-color:#eeeeee">Partitions</span>
<span class="t" style="left:156.00px;top:727.00px;font-size:29.75px;letter-spacing:-0.343px;color:#000">Parameters</span>
<span class="t" style="left:156.00px;top:778.00px;font-size:29.75px;letter-spacing:0.329px;color:#000">Macros</span>
<span class="t" style="left:157.00px;top:829.00px;font-size:29.75px;letter-spacing:-0.308px;color:#000">Scripts</span>
<span class="t" style="left:157.00px;top:880.00px;font-size:29.75px;letter-spacing:0.213px;color:#000">Object scripts</span>
<span class="t" style="left:156.00px;top:930.00px;font-size:29.75px;letter-spacing:-0.118px;color:#000">Filters</span>
<span class="t" style="left:156.00px;top:981.00px;font-size:29.75px;letter-spacing:0.375px;color:#000">Predefined transformations</span>
<span class="t" style="left:157.00px;top:1032.00px;font-size:29.75px;letter-spacing:-0.326px;color:#000">Snapshots</span>
<span class="t" style="left:156.00px;top:1083.00px;font-size:29.75px;letter-spacing:0.546px;color:#000">Deployments</span>
<span class="t" style="left:157.00px;top:1133.00px;font-size:29.75px;letter-spacing:0.003px;color:#000">Groups</span>
<span class="t" style="left:156.00px;top:1184.00px;font-size:29.75px;letter-spacing:0.854px;color:#000">Models</span>
<span class="t" style="left:991.54px;top:268.00px;font-size:21.4px;color:#000;-webkit-text-stroke-color:#f5f5f5;-webkit-text-stroke-width:0.006em;transform:scaleX(0.9627)">Locked by</span>
<span class="t" style="left:864.29px;top:337.00px;font-size:26.6px;color:#000;-webkit-text-stroke-width:0.006em;transform:scaleX(0.9141)">Star</span>
<span class="t" style="left:879.75px;top:394.00px;font-size:26.6px;color:#000;-webkit-text-stroke-width:0.006em;transform:scaleX(0.9512)">Star name</span>
<span class="t" style="left:879.80px;top:459.00px;font-size:26.6px;color:#000;-webkit-text-stroke-width:0.006em;transform:scaleX(0.9046)">Galaxy</span>
<span class="t" style="left:879.78px;top:526.00px;font-size:26.6px;color:#000;-webkit-text-stroke-width:0.006em;transform:scaleX(0.9197)">Schema</span>
<span class="t" style="left:879.70px;top:591.00px;font-size:26.6px;letter-spacing:-0.032px;color:#000">Order in diagram</span>
<span class="t" style="left:880.20px;top:656.00px;font-size:26.6px;letter-spacing:-0.243px;color:#000">Description</span>
<span class="t" style="left:879.07px;top:766.00px;font-size:26.6px;color:#000;-webkit-text-stroke-width:0.006em;transform:scaleX(0.9641)">MDX</span>
<span class="t" style="left:1133.08px;top:403.00px;font-size:26.6px;color:#000;-webkit-text-stroke-width:0.006em;transform:scaleX(0.9183)">Star</span>
<span class="t" style="left:1127.10px;top:466.00px;font-size:26.6px;color:#000;-webkit-text-stroke-color:#ebebeb;-webkit-text-stroke-width:0.006em;transform:scaleX(0.8973)">Galaxy</span>
<span class="t" style="left:1127.15px;top:531.00px;font-size:26.6px;color:#000;-webkit-text-stroke-color:#ebebeb;-webkit-text-stroke-width:0.006em;transform:scaleX(0.854)">STAR</span>
<span class="t" style="left:1131.00px;top:729.00px;font-size:26.6px;letter-spacing:0.190px;color:#000">Multidimensional</span>
<span class="t" style="left:1384.80px;top:734.00px;font-size:26.6px;color:#000;-webkit-text-stroke-color:#ebebeb;-webkit-text-stroke-width:0.006em;transform:scaleX(0.942)">Tabular</span>
<span class="t" style="left:3400.87px;top:1988.00px;font-size:26.6px;color:#000;-webkit-text-stroke-color:#f6f6f6;-webkit-text-stroke-width:0.006em;transform:scaleX(0.9299)">Cancel</span>
<span class="t" style="left:3674.91px;top:1988.00px;font-size:26.6px;color:#000;-webkit-text-stroke-color:#f6f6f6;-webkit-text-stroke-width:0.006em;transform:scaleX(0.8942)">Save</span>
</body></html>
